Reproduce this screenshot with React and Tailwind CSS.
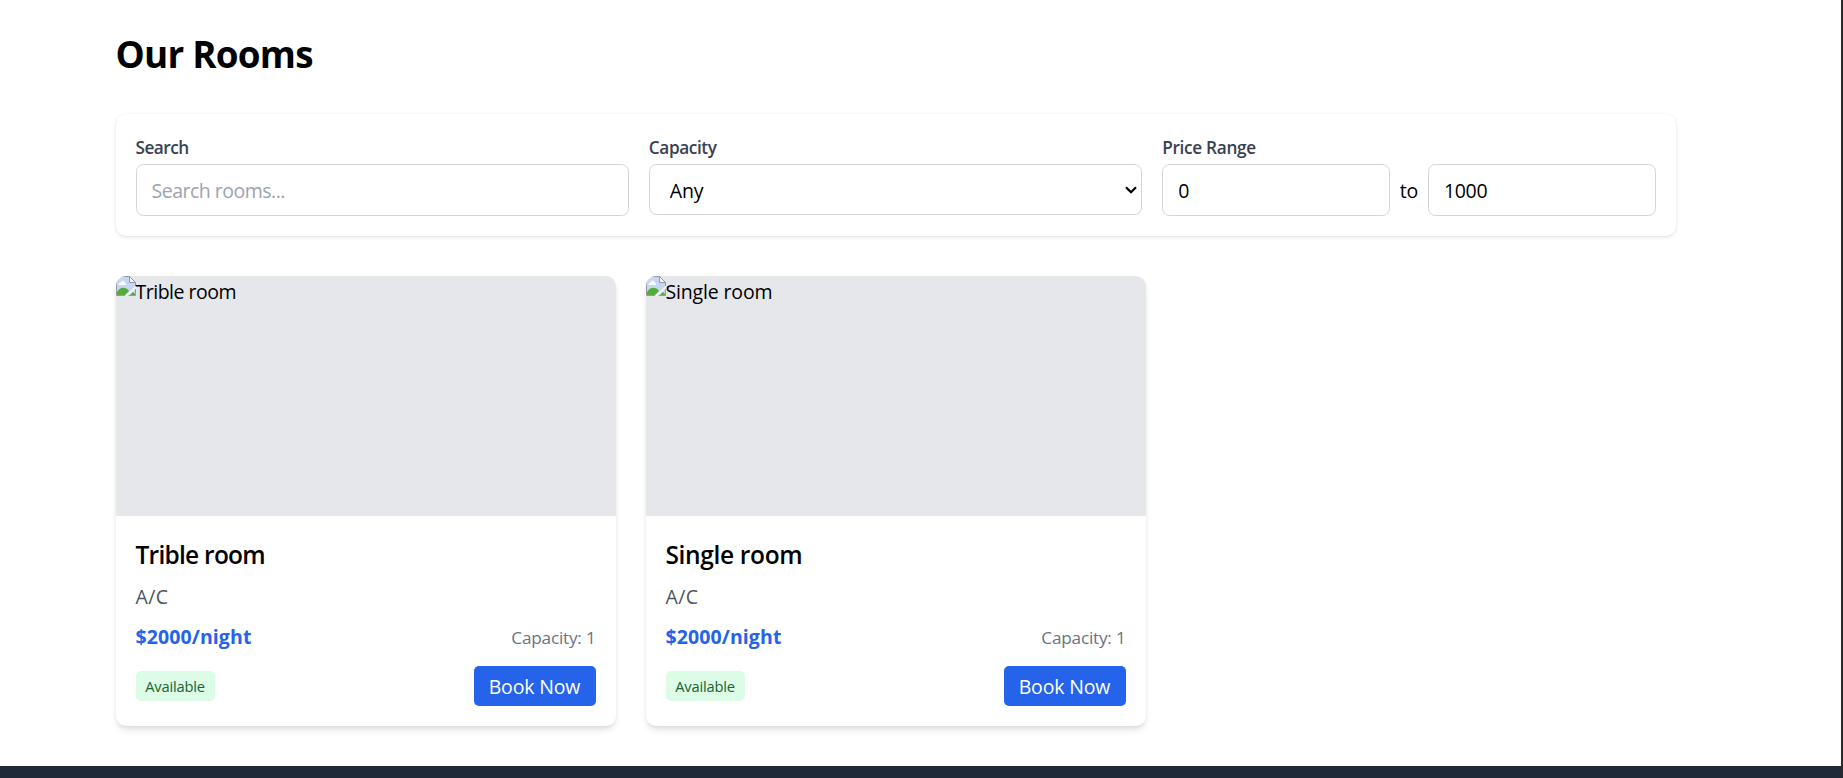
const rooms = [
  { name: 'Trible room', altTracking: 'tracking-[-0.5px]', titleTracking: 'tracking-[-0.75px]' },
  { name: 'Single room', altTracking: 'tracking-[-0.15px]', titleTracking: 'tracking-[-0.35px]' },
].map((room) => ({ ...room, description: 'A/C', price: 2000, capacity: 1 }));

const field =
  'w-full min-w-0 rounded-[7.5px] border border-[#d1d5db] bg-white px-[15px] pt-px h-[52px] text-[19.5px] text-black placeholder:text-[#9ca3af] outline-none';

function MissingImage() {
  return (
    <svg width="20" height="20" viewBox="0 0 20 20" className="shrink-0">
      <path d="M.5 .5H13.5L19.5 6.5V19.5H.5Z" fill="#c6d7f5" stroke="#999" />
      <path d="M2.5 9C2.5 7 4 6.5 5 6.5C5.5 4 8.5 4 9 7C10.5 7 10.5 9 9.5 9Z" fill="#fff" />
      <path d="M1 19V16C4 10.500 10 10.500 13 15L9 19Z" fill="#55ab3a" />
      <path d="M14 19L17 16L19 18V19Z" fill="#55ab3a" />
      <path d="M8.500 20L20 9.500V12.500L12 20Z" fill="#f1f2f4" />
      <path d="M13.500 .5V6.500H19.500Z" fill="#f3f5fa" stroke="#999" />
    </svg>
  );
}

function Label({ children, tracking }) {
  return (
    <label className={`mb-[4px] block pt-px text-[17.2px] leading-[25px] font-semibold text-[#374151] ${tracking}`}>
      {children}
    </label>
  );
}

function RoomCard({ room }) {
  return (
    <article className="overflow-hidden rounded-[10px] bg-white shadow-[0_5px_7.5px_-1px_rgba(0,0,0,0.1),0_2.5px_5px_-2.5px_rgba(0,0,0,0.1)]">
      <div className="flex h-[240px] items-start bg-[#e5e7eb]">
        <MissingImage />
        <span className={`pt-px text-[19.5px] leading-[30px] ${room.altTracking}`}>{room.name}</span>
      </div>
      <div className="p-5 pt-[21px]">
        <h2 className={`mb-[10px] text-[24.5px] leading-[35px] font-semibold ${room.titleTracking}`}>{room.name}</h2>
        <p className="mb-[10px] text-[19.5px] leading-[30px] tracking-[0.4px] text-[#4b5563]">{room.description}</p>
        <div className="mb-[14px] flex items-center justify-between">
          <span className="text-[19.5px] leading-[30px] font-bold tracking-[0.1px] text-[#2563eb]">${room.price}/night</span>
          <span className="text-[17.2px] leading-[25px] tracking-[-0.22px] text-[#6b7280]">Capacity: {room.capacity}</span>
        </div>
        <div className="flex items-center justify-between">
          <span className="flex h-[30px] w-[79px] items-center justify-center rounded-[5px] bg-[#dcfce7] text-[14.7px] tracking-[-0.2px] text-[#166534]">
            Available
          </span>
          <button className="flex h-10 w-[122px] items-center justify-center rounded-[5px] bg-[#2563eb] pt-[2px] text-[19.5px] tracking-[-0.15px] text-white">
            Book Now
          </button>
        </div>
      </div>
    </article>
  );
}

export default function App() {
  return (
    <div className="flex h-[778px] bg-[#2b2b2b] font-['Open_Sans','Noto_Sans',sans-serif] text-black">
      <div className="flex w-[1841px] flex-col bg-white">
        <main className="h-[766px] w-[1675.5px] pt-[32px] pl-[115.5px]">
          <h1 className="mb-[37px] text-[36.8px] leading-[45px] font-bold tracking-[-0.75px]">Our Rooms</h1>
          <section className="mb-10 grid h-[122px] grid-cols-3 gap-5 rounded-[10px] bg-white p-5 shadow-[0_1px_4px_rgba(0,0,0,0.1),0_1px_2.5px_-1px_rgba(0,0,0,0.1)]">
            <div>
              <Label tracking="tracking-[-0.5px]">Search</Label>
              <input className={`${field} tracking-[-0.5px]`} placeholder="Search rooms..." />
            </div>
            <div>
              <Label tracking="tracking-[-0.4px]">Capacity</Label>
              <div className="relative">
                <select className="h-[51px] w-full appearance-none rounded-[7.5px] border border-[#d1d5db] bg-white px-5 pt-[2px] text-[19.5px] tracking-[-0.2px]">
                  <option>Any</option>
                </select>
                <svg width="12" height="8" viewBox="0 0 12 8" className="pointer-events-none absolute top-[22px] right-[5px]">
                  <path d="M1 1.2L6 6.2L11 1.2" fill="none" stroke="#000" strokeWidth="2.2" />
                </svg>
              </div>
            </div>
            <div>
              <Label tracking="tracking-[-0.3px]">Price Range</Label>
              <div className="flex items-center gap-[10px]">
                <input className={`${field} tracking-[-0.3px]`} defaultValue="0" />
                <span className="pt-[2px] text-[19.5px] tracking-[-0.3px]">to</span>
                <input className={`${field} tracking-[-0.3px]`} defaultValue="1000" />
              </div>
            </div>
          </section>
          <section className="grid grid-cols-3 gap-[30px]">
            {rooms.map((room) => (
              <RoomCard key={room.name} room={room} />
            ))}
          </section>
        </main>
        <footer className="h-3 bg-[#1f2937]" />
      </div>
    </div>
  );
}
